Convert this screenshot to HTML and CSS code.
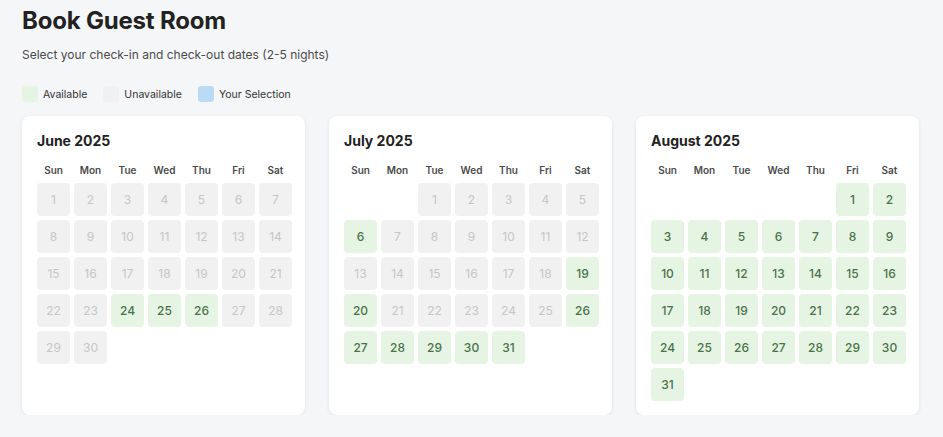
FILE: index.html
```html
<!DOCTYPE html>
<html>
<head>
<meta charset="utf-8">
<link rel="stylesheet" href="styles.css">
</head>
<body>
<div class="page">
  <h1 class="title">Book Guest Room</h1>
  <p class="subtitle">Select your check-in and check-out dates (2-5 nights)</p>
  <div class="legend">
    <span class="legend-item"><span class="swatch sw-avail"></span>Available</span>
    <span class="legend-item"><span class="swatch sw-unavail"></span>Unavailable</span>
    <span class="legend-item"><span class="swatch sw-sel"></span>Your Selection</span>
  </div>
  <div class="months" id="months"></div>
</div>
<script src="app.js"></script>
</body>
</html>
```
FILE: app.js
```js
const months = [
  { name: "June 2025", start: 0, days: 30, avail: [24, 25, 26] },
  { name: "July 2025", start: 2, days: 31, avail: [6, 19, 20, 26, 27, 28, 29, 30, 31] },
  { name: "August 2025", start: 5, days: 31, avail: "all" }
];
const wd = ["Sun", "Mon", "Tue", "Wed", "Thu", "Fri", "Sat"];
const root = document.getElementById("months");
months.forEach(m => {
  const card = document.createElement("div");
  card.className = "card";
  let html = '<h2 class="month-title">' + m.name + '</h2><div class="grid">';
  wd.forEach(d => { html += '<div class="wd">' + d + '</div>'; });
  for (let i = 0; i < m.start; i++) html += '<div class="blank"></div>';
  for (let d = 1; d <= m.days; d++) {
    const ok = m.avail === "all" || m.avail.includes(d);
    html += '<div class="day ' + (ok ? "avail" : "unavail") + '">' + d + '</div>';
  }
  html += '</div>';
  card.innerHTML = html;
  root.appendChild(card);
});
```
FILE: styles.css
```css
* { box-sizing: border-box; }
html, body { margin: 0; padding: 0; }
body {
  background: #f5f6f8;
  font-family: Inter, "Liberation Sans", sans-serif;
  color: #222;
}
.page { padding: 6px 22px 0 22px; }
.title {
  margin: 0;
  font-size: 24px;
  line-height: 30px;
  font-weight: 700;
  color: #222;
  letter-spacing: -0.2px;
}
.subtitle {
  margin: 10px 0 0 0;
  font-size: 12px;
  line-height: 17px;
  color: #4a4a4a;
}
.legend {
  display: flex;
  gap: 16px;
  margin-top: 23px;
  height: 16px;
  align-items: center;
}
.legend-item {
  display: flex;
  align-items: center;
  gap: 5px;
  font-size: 10.5px;
  color: #333;
}
.swatch {
  width: 16px;
  height: 16px;
  border-radius: 3px;
  display: inline-block;
}
.sw-avail { background: #e6f4e3; }
.sw-unavail { background: #f1f1f1; }
.sw-sel { background: #b9dbf6; }
.months {
  display: grid;
  grid-template-columns: repeat(3, 283px);
  gap: 24px;
  margin-top: 14px;
}
.card {
  background: #fff;
  border-radius: 8px;
  box-shadow: 0 1px 4px rgba(0,0,0,0.08);
  padding: 16px 14px 14px 15px;
}
.month-title {
  margin: 0;
  font-size: 14px;
  line-height: 18px;
  font-weight: 700;
  color: #222;
}
.grid {
  display: grid;
  grid-template-columns: repeat(7, 33px);
  column-gap: 4px;
  row-gap: 4px;
  margin-top: 13px;
}
.wd {
  font-size: 10px;
  line-height: 14px;
  font-weight: 600;
  color: #4a4a4a;
  text-align: center;
  margin-bottom: 2px;
}
.day {
  height: 33px;
  border-radius: 4px;
  display: flex;
  align-items: center;
  justify-content: center;
  font-size: 12px;
}
.avail { background: #e6f4e3; color: #4a724a; font-weight: 500; }
.unavail { background: #f1f1f1; color: #c6c6c6; }
```
